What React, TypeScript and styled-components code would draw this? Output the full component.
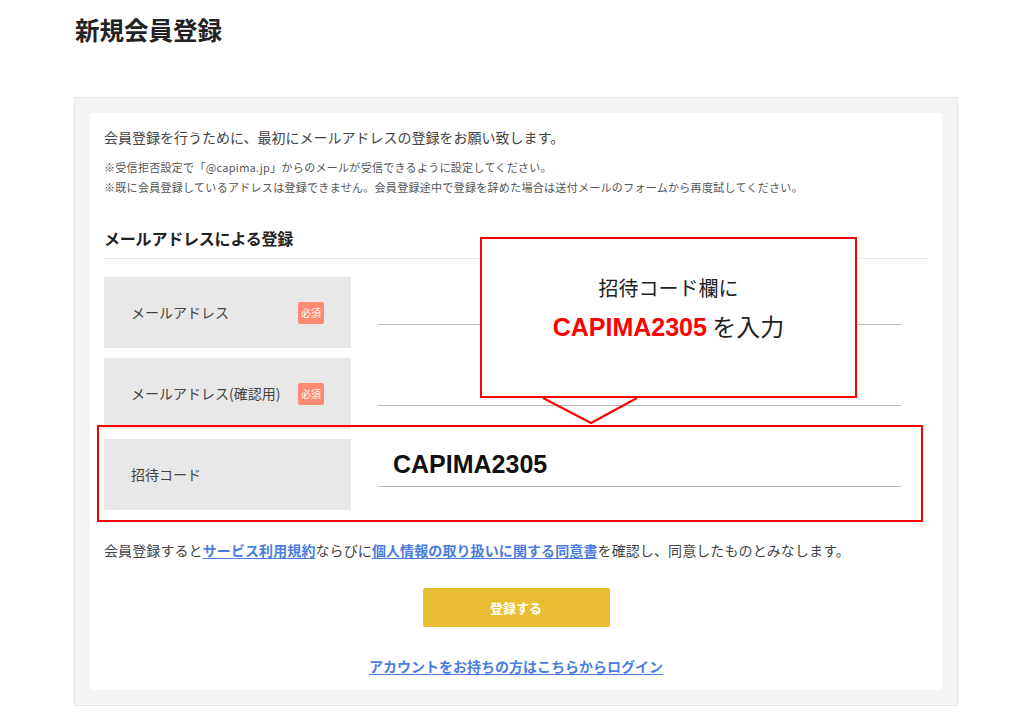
import styled, { createGlobalStyle } from "styled-components"

const GlobalStyle = createGlobalStyle`
  body {
    margin: 0;
    background: #fff;
    font-family: "Noto Sans CJK JP", "Noto Sans", sans-serif;
    color: #333;
  }
`

const Page = styled.div`
  padding: 14px 0 0 74px;
`

const PageTitle = styled.h1`
  margin: 0 0 51px 1px;
  font-size: 24.5px;
  line-height: 32px;
  font-weight: 700;
  color: #222;
`

const Panel = styled.section`
  width: 852px;
  padding: 15px;
  background: #f5f5f5;
  border: 1px solid #e6e6e6;
`

const Card = styled.div`
  position: relative;
  background: #fff;
  padding: 14px 14px 14px;
`

const Lead = styled.p`
  margin: 0 0 10px;
  font-size: 14px;
  line-height: 20px;
  color: #444;
`

const Note = styled.p`
  margin: 0;
  font-size: 11px;
  line-height: 20px;
  color: #555;
  letter-spacing: 0.3px;
`

const SectionHeading = styled.h2`
  margin: 31px 0 0;
  padding-bottom: 10px;
  border-bottom: 1px solid #e8e8e8;
  font-size: 16px;
  line-height: 20px;
  font-weight: 700;
  color: #222;
  letter-spacing: -0.2px;
`

const Fields = styled.div`
  display: flex;
  flex-direction: column;
  gap: 10px;
  margin-top: 18px;
`

const Row = styled.div`
  display: grid;
  grid-template-columns: 247px 1fr;
  height: 71px;
`

const Label = styled.div`
  display: flex;
  align-items: center;
  justify-content: space-between;
  padding: 0 27px 2px;
  background: #e8e8e8;
  font-size: 14px;
  color: #444;
`

const Badge = styled.span`
  display: flex;
  align-items: center;
  justify-content: center;
  width: 26px;
  height: 22px;
  margin-top: 2px;
  border-radius: 2px;
  background: #ff8a73;
  color: #fff;
  font-size: 10px;
`

const InputCell = styled.div`
  display: flex;
  align-items: flex-end;
  padding: 0 27px 23px;
`

const Input = styled.input`
  width: 100%;
  height: 44px;
  padding: 0 15px;
  box-sizing: border-box;
  border: none;
  border-bottom: 1px solid #b9b9b9;
  background: transparent;
  outline: none;
  font-family: "Liberation Sans", Arial, sans-serif;
  font-size: 25px;
  font-weight: 700;
  color: #111;
`

const Consent = styled.p`
  margin: 30px 0 0;
  font-size: 14px;
  line-height: 20px;
  color: #444;
  letter-spacing: 0.1px;
`

const TextLink = styled.a`
  font-size: 14px;
  line-height: 20px;
  color: #4a7de0;
  font-weight: 700;
  text-decoration: underline;
  text-underline-offset: 2px;
`

const Actions = styled.div`
  display: flex;
  flex-direction: column;
  align-items: center;
  gap: 29px;
  margin-top: 28px;
`

const SubmitButton = styled.button`
  width: 187px;
  height: 39px;
  border: none;
  border-radius: 2px;
  background: #e9be33;
  color: #fff;
  font-family: inherit;
  font-size: 13px;
  font-weight: 700;
`

const Highlight = styled.div`
  position: absolute;
  left: 7px;
  top: 312px;
  width: 826px;
  height: 97px;
  box-sizing: border-box;
  border: 2px solid #ff0000;
  pointer-events: none;
`

const Callout = styled.div`
  position: absolute;
  left: 390px;
  top: 124px;
  width: 377px;
  height: 161px;
  box-sizing: border-box;
  border: 2px solid #ff0000;
  background: #fff;
  display: flex;
  flex-direction: column;
  align-items: center;
  padding-top: 34px;
  gap: 8px;
`

const CalloutLine = styled.div<{ size: number }>`
  font-size: ${p => p.size}px;
  line-height: 30px;
  color: #222;
  font-weight: 400;
`

const Code = styled.span`
  font-family: "Liberation Sans", Arial, sans-serif;
  font-size: 25px;
  font-weight: 700;
  color: #ff0000;
`

const Tail = styled.svg`
  position: absolute;
  left: 453px;
  top: 284px;
  overflow: visible;
`

type Field = {
  label: string
  required?: boolean
  value?: string
}

const fields: Field[] = [
  { label: "メールアドレス", required: true },
  { label: "メールアドレス(確認用)", required: true },
  { label: "招待コード", value: "CAPIMA2305" },
]

export default function App() {
  return (
    <>
      <GlobalStyle />
      <Page>
        <PageTitle>新規会員登録</PageTitle>
        <Panel>
          <Card>
            <Lead>会員登録を行うために、最初にメールアドレスの登録をお願い致します。</Lead>
            <Note>※受信拒否設定で「@capima.jp」からのメールが受信できるように設定してください。</Note>
            <Note>※既に会員登録しているアドレスは登録できません。会員登録途中で登録を辞めた場合は送付メールのフォームから再度試してください。</Note>

            <SectionHeading>メールアドレスによる登録</SectionHeading>
            <Fields>
              {fields.map(({ label, required, value }) => (
                <Row key={label}>
                  <Label>
                    {label}
                    {required && <Badge>必須</Badge>}
                  </Label>
                  <InputCell>
                    <Input defaultValue={value} />
                  </InputCell>
                </Row>
              ))}
            </Fields>

            <Consent>
              会員登録すると<TextLink href="#">サービス利用規約</TextLink>ならびに
              <TextLink href="#">個人情報の取り扱いに関する同意書</TextLink>を確認し、同意したものとみなします。
            </Consent>

            <Actions>
              <SubmitButton>登録する</SubmitButton>
              <TextLink href="#">アカウントをお持ちの方はこちらからログイン</TextLink>
            </Actions>

            <Highlight />
            <Callout>
              <CalloutLine size={20}>招待コード欄に</CalloutLine>
              <CalloutLine size={24}>
                <Code>CAPIMA2305</Code> を入力
              </CalloutLine>
            </Callout>
            <Tail width="94" height="27" viewBox="0 0 94 27">
              <polyline points="0,1 48,26 94,1" fill="none" stroke="#ff0000" strokeWidth="2" />
            </Tail>
          </Card>
        </Panel>
      </Page>
    </>
  )
}
